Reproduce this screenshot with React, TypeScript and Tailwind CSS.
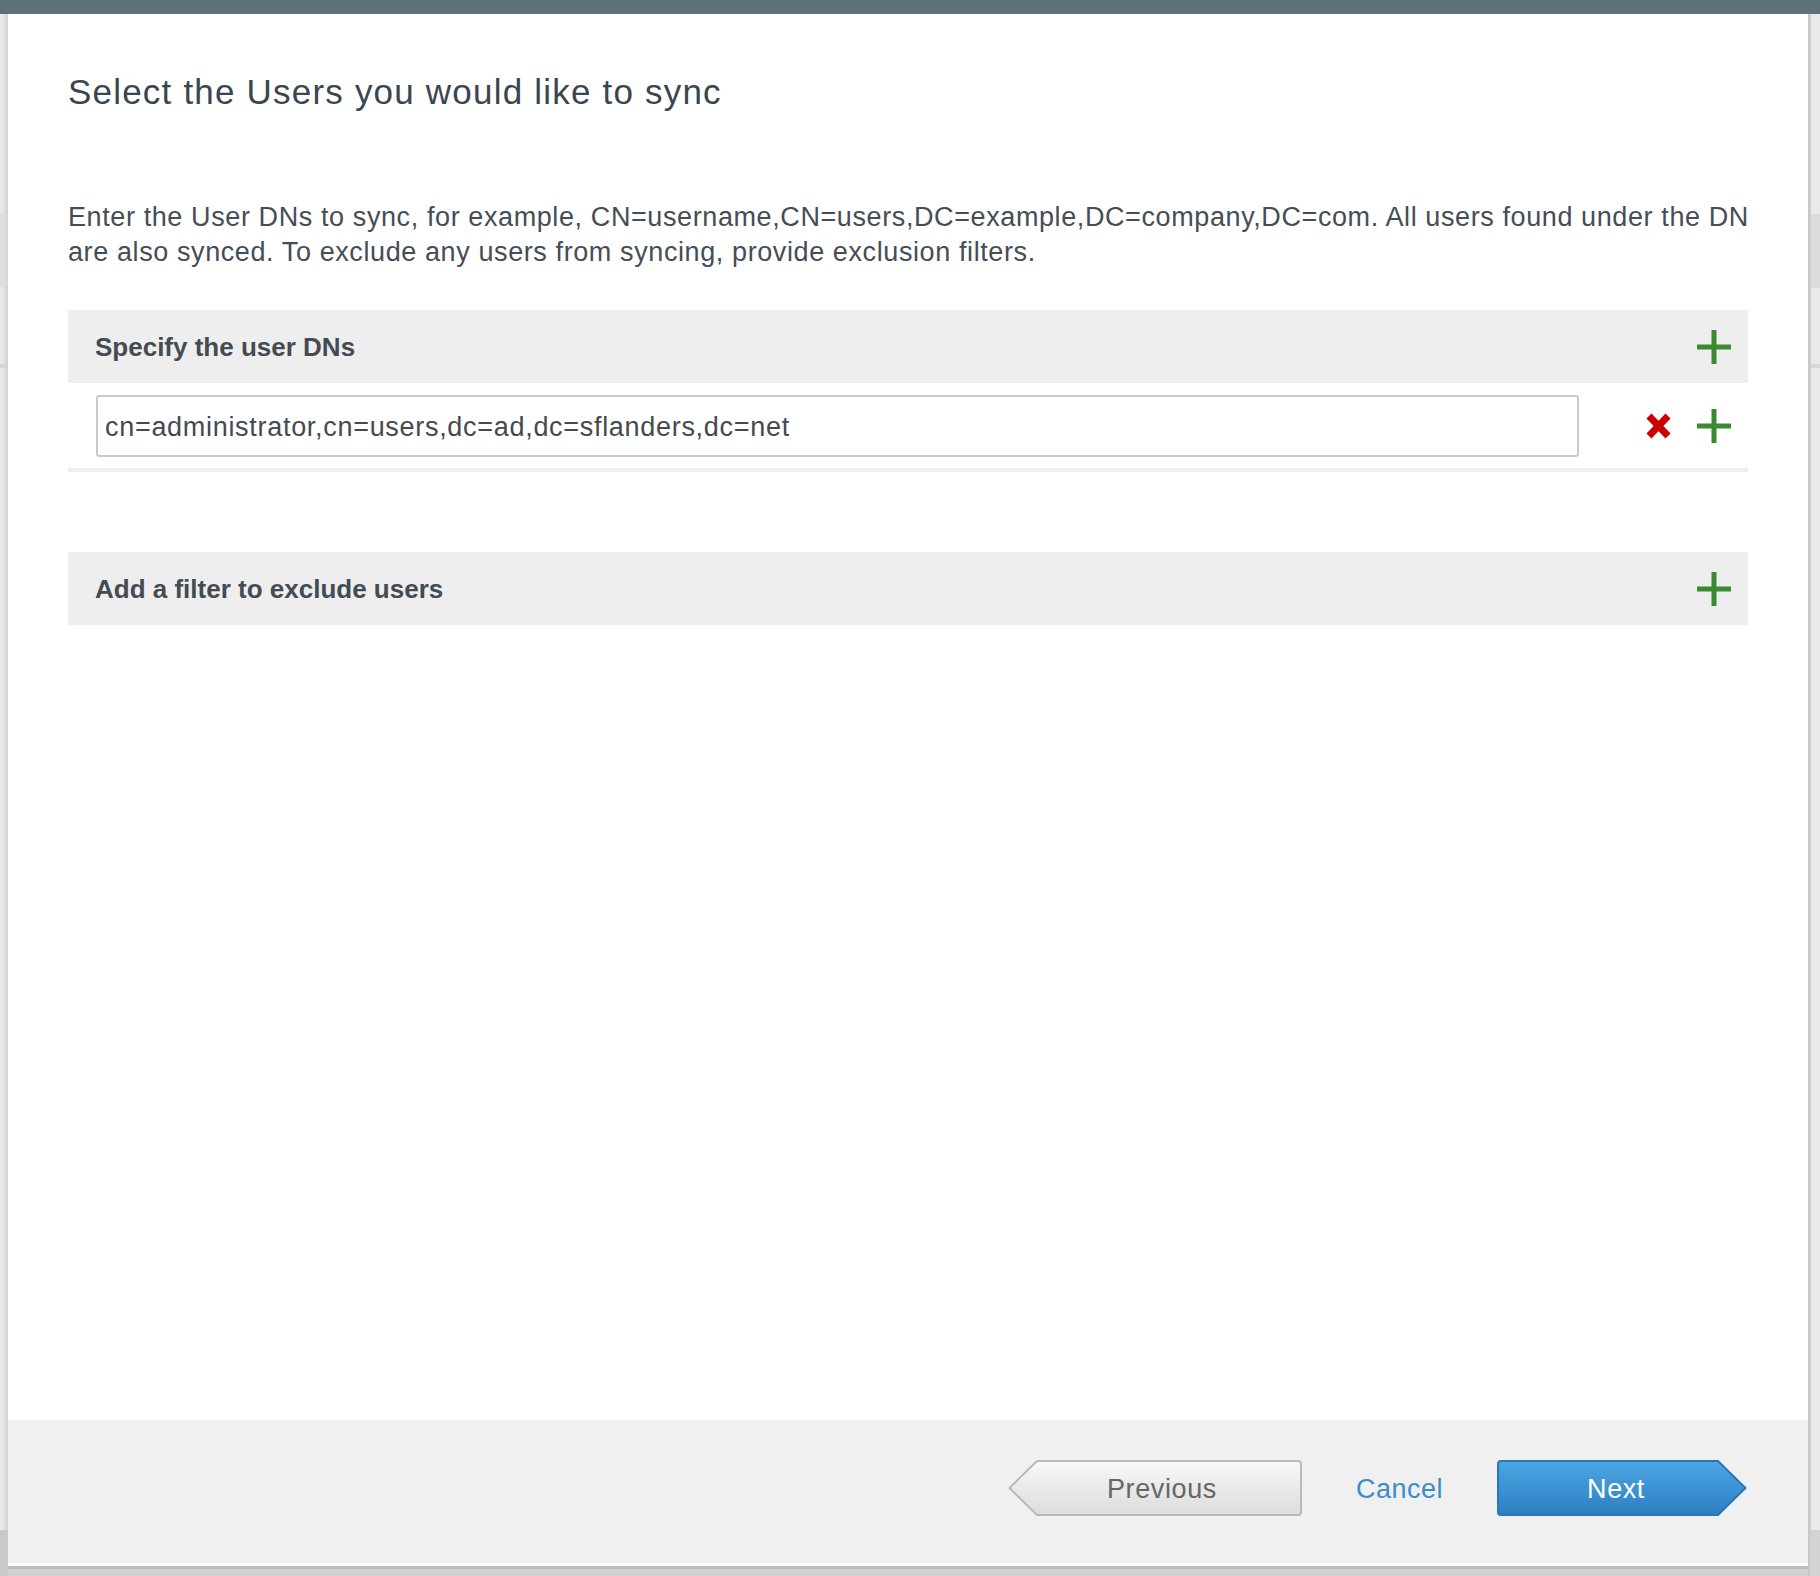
import React from "react";

const font = { fontFamily: '"Liberation Sans", Arial, Helvetica, sans-serif' };

function Plus() {
  return (
    <svg width="34" height="34" viewBox="0 0 34 34" className="shrink-0">
      <rect x="14.5" y="0" width="5" height="34" fill="#3b8a31" />
      <rect x="0" y="14.5" width="34" height="5" fill="#3b8a31" />
    </svg>
  );
}

function RedX() {
  return (
    <svg width="27" height="26" viewBox="0 0 27 26" className="shrink-0">
      <path d="M4 3 L23 23 M23 3 L4 23" stroke="#cc0000" strokeWidth="7" strokeLinecap="butt" />
    </svg>
  );
}

function SectionHeader({ label }: { label: string }) {
  return (
    <div className="flex h-[73px] items-center justify-between bg-[#eeeeee] pl-[27px] pr-[17px]">
      <span className="pt-[2px] text-[26px] font-bold text-[#434b53]">{label}</span>
      <Plus />
    </div>
  );
}

function PrevButton() {
  const w = 294;
  const h = 56;
  return (
    <button className="relative flex h-[56px] w-[294px] items-center justify-center pl-[14px]">
      <svg width={w} height={h} viewBox={`0 0 ${w} ${h}`} className="absolute inset-0">
        <defs>
          <linearGradient id="pg" x1="0" y1="0" x2="0" y2="1">
            <stop offset="0" stopColor="#f8f8f8" />
            <stop offset="1" stopColor="#dcdcdc" />
          </linearGradient>
        </defs>
        <path
          d={`M29 1 H${w - 4} Q${w - 1} 1 ${w - 1} 4 V${h - 4} Q${w - 1} ${h - 1} ${w - 4} ${h - 1} H29 L1.5 ${h / 2} Z`}
          fill="url(#pg)"
          stroke="#b9b9b9"
          strokeWidth="2"
        />
      </svg>
      <span className="relative pt-[3px] text-[27px] tracking-[0.6px] text-[#666666]">Previous</span>
    </button>
  );
}

function NextButton() {
  const w = 250;
  const h = 56;
  return (
    <button className="relative flex h-[56px] w-[250px] items-center justify-center pr-[12px]">
      <svg width={w} height={h} viewBox={`0 0 ${w} ${h}`} className="absolute inset-0">
        <defs>
          <linearGradient id="ng" x1="0" y1="0" x2="0" y2="1">
            <stop offset="0" stopColor="#4ca6e3" />
            <stop offset="1" stopColor="#2c7fc2" />
          </linearGradient>
        </defs>
        <path
          d={`M4 1 H${w - 29} L${w - 1.5} ${h / 2} L${w - 29} ${h - 1} H4 Q1 ${h - 1} 1 ${h - 4} V4 Q1 1 4 1 Z`}
          fill="url(#ng)"
          stroke="#2a76b6"
          strokeWidth="2"
        />
      </svg>
      <span className="relative pt-[3px] text-[27px] tracking-[0.6px] text-white">Next</span>
    </button>
  );
}

function LeftGutter() {
  return (
    <div className="flex w-[8px] flex-col bg-linear-to-r from-[#ebebeb] via-[#e3e3e3] to-[#cfcfcf]">
      <div className="h-[199px]" />
      <div className="h-[74px] bg-[#d9d9d9]/60" />
      <div className="h-[77px]" />
      <div className="h-[4px] bg-[#d5d5d5]" />
      <div className="flex-1" />
      <div className="h-[46px] bg-[#c9c9c9]" />
    </div>
  );
}

function RightGutter() {
  return (
    <div className="flex w-[12px]">
      <div className="w-[3px] bg-linear-to-r from-[#c4c4c4] to-[#d2d2d2]" />
      <div className="flex flex-1 flex-col bg-[#e9e9e9]">
        <div className="h-[200px]" />
        <div className="h-[74px] bg-[#dcdcdc]" />
        <div className="h-[76px]" />
        <div className="h-[4px] bg-[#d6d6d6]" />
        <div className="flex-1" />
        <div className="h-[46px] bg-[#d3d3d3]" />
      </div>
    </div>
  );
}

export default function App() {
  return (
    <div className="flex h-[1576px] w-[1820px] flex-col overflow-hidden bg-[#e9e9e9]" style={font}>
      <div className="h-[14px] shrink-0 bg-[#5e717b]" />
      <div className="flex flex-1">
        <LeftGutter />
        <div className="flex w-[1800px] flex-col">
          <div className="flex h-[1552px] flex-col bg-white pb-[3px]">
            <div className="flex flex-col px-[60px]">
              <h1 className="mt-[58px] text-[35px] leading-[40px] tracking-[1.2px] text-[#3b4550]">
                Select the Users you would like to sync
              </h1>
              <p className="mt-[88px] whitespace-nowrap text-[27px] leading-[35px] tracking-[0.6px] text-[#454d56]">
                Enter the User DNs to sync, for example, CN=username,CN=users,DC=example,DC=company,DC=com. All users found under the DN
                <br />
                are also synced. To exclude any users from syncing, provide exclusion filters.
              </p>
              <div className="mt-[40px] flex flex-col">
                <SectionHeader label="Specify the user DNs" />
                <div className="flex items-center border-b-4 border-[#eeeeee] pb-[11px] pl-[28px] pr-[17px] pt-[12px]">
                  <div className="flex h-[62px] w-[1483px] items-center rounded-[3px] border-2 border-[#cacaca] bg-white pl-[7px]">
                    <span className="pt-[2px] text-[27px] tracking-[0.7px] text-[#444a50]">
                      cn=administrator,cn=users,dc=ad,dc=sflanders,dc=net
                    </span>
                  </div>
                  <div className="ml-[66px] flex items-center gap-[25px]">
                    <RedX />
                    <Plus />
                  </div>
                </div>
              </div>
              <div className="mt-[80px]">
                <SectionHeader label="Add a filter to exclude users" />
              </div>
            </div>
            <div className="mt-auto flex h-[143px] items-start justify-end bg-[#f0f0f0] pr-[61px] pt-[40px]">
              <PrevButton />
              <button className="ml-[54px] flex h-[56px] items-center pt-[3px] text-[27px] tracking-[0.5px] text-[#3c8dca]">
                Cancel
              </button>
              <div className="ml-[54px]">
                <NextButton />
              </div>
            </div>
          </div>
          <div className="h-[3px] bg-[#bdbdbd]" />
          <div className="flex-1 bg-[#d2d2d2]" />
        </div>
        <RightGutter />
      </div>
    </div>
  );
}
